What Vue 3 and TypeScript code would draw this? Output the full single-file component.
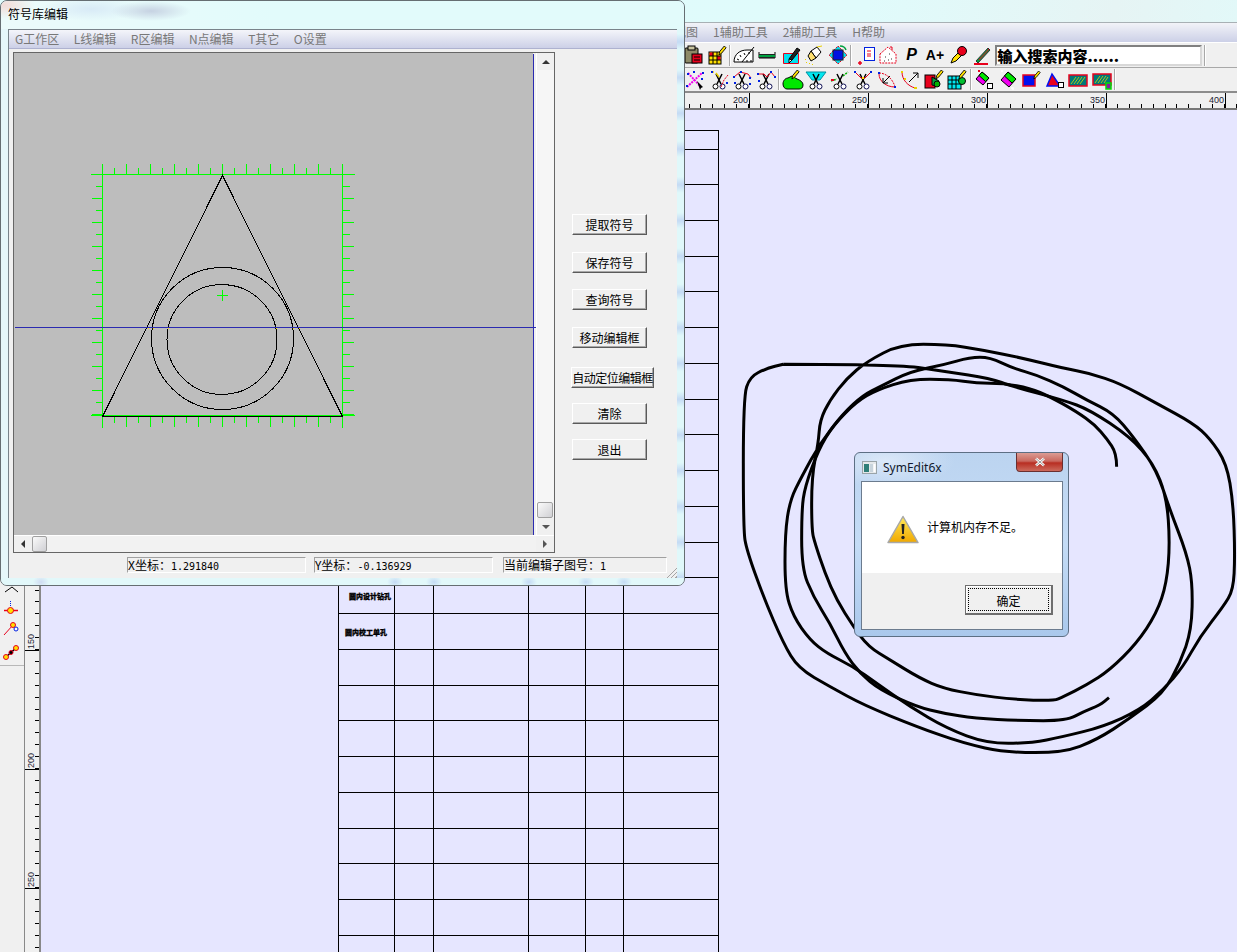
<script setup lang="ts">
// SymEdit main window with the symbol library editor and an out-of-memory
// dialog sitting on top. Canvases use screen coordinates in their viewBox.
const STEP = 11.9;

const hMajors = [749, 868, 987, 1106, 1225];
const hMinors = Array.from({ length: 48 }, (_, i) => 689 + i * STEP);
const hLabels = [200, 250, 300, 350, 400];

const vMajors = [650, 769, 888];
const vMinors = Array.from({ length: 32 }, (_, i) => 590 + i * STEP);
const vLabels = [150, 200, 250];

const colX = [338, 394, 433, 528, 585, 623, 718];
const rowY = [130, 149, ...Array.from({ length: 22 }, (_, i) => 184 + i * 35.75)];

const menus = ["G工作区", "L线编辑", "R区编辑", "N点编辑", "T其它", "O设置"];
const buttons = [
  { label: "提取符号", gap: 162 },
  { label: "保存符号", gap: 17 },
  { label: "查询符号", gap: 16 },
  { label: "移动编辑框", gap: 17 },
  { label: "自动定位编辑框", gap: 19, wide: true },
  { label: "清除", gap: 15 },
  { label: "退出", gap: 15 },
];

// green frame ticks around the symbol edit box, every 12px
const ticks = Array.from({ length: 21 }, (_, i) => ({
  at: i * 12,
  len: i % 2 === 0 ? 11 : 7,
}));
const hits = [147, 152, 167, 275, 292, 298];

// pen scribble, traced in 3x coordinates
const traces = [
  "1160,410 1160,370 1130,325 1095,285 1040,245 960,200 900,175 820,160 740,160 660,148 540,148 440,180 380,215 310,285 265,360 225,470 215,540 215,715 250,800 300,880 345,970 390,1030 450,1080 560,1130 640,1150 735,1165 870,1172 1010,1172 1060,1145 1110,1125 1137,1103",
  "160,103 500,103 650,125 780,145 850,170 1000,210 1080,240 1200,320 1270,400 1310,500 1320,640 1310,760 1280,850 1220,940 1140,1020 1070,1065 1000,1100 970,1113 850,1108 740,1095 640,1075 570,1045 480,990 415,950 370,890 320,810 285,730 255,640 245,600 245,440 265,340 270,270 300,210 350,145 410,95 510,43 650,43 760,60 880,85 1000,115 1080,130 1170,160 1280,220 1390,280 1440,325 1490,400 1510,520 1515,680 1510,780 1480,830 1410,920 1360,1010 1300,1080 1230,1140 1120,1190 1000,1220 900,1240 770,1240 650,1195 540,1130 440,1060 370,1010 290,970 240,930 190,860 165,780 165,610 180,510 215,440 270,340 340,250 400,195 450,170 540,125 640,105 720,82 780,82 850,115 920,135 1000,170 1070,210 1150,250 1210,320 1280,420 1320,540 1370,670 1388,760 1385,900 1350,1000 1300,1090 1200,1165 1100,1230 1000,1268 830,1268 700,1240 560,1190 400,1125 300,1070 205,1015 160,940 100,800 50,660 40,600 40,200 60,140 110,115 160,103",
];

// round the traced corners off through the segment midpoints
function smooth(trace: string): string {
  const p = trace.split(" ").map((s) => s.split(",").map(Number));
  let d = `M${p[0][0]} ${p[0][1]}`;
  for (let i = 1; i < p.length - 1; i++) {
    const mx = (p[i][0] + p[i + 1][0]) / 2;
    const my = (p[i][1] + p[i + 1][1]) / 2;
    d += ` Q${p[i][0]} ${p[i][1]} ${mx} ${my}`;
  }
  const last = p[p.length - 1];
  return `${d} L${last[0]} ${last[1]}`;
}
const scribble = traces.map(smooth);
</script>

<template>
  <div class="desktop">
    <svg class="defs" width="0" height="0">
      <symbol id="sc" viewBox="0 0 22 22">
        <path d="M8 5l5 10M14 5l-5 10" stroke="#000" stroke-width="1.5" fill="none" />
        <circle cx="7.5" cy="17.5" r="2.5" fill="#fff" stroke="#000" />
        <circle cx="14.5" cy="17.5" r="2.5" fill="#fff" stroke="#115" />
      </symbol>
      <symbol id="pen" viewBox="0 0 10 12">
        <path d="M1 11l1-4 5-6 2 2-5 6z" fill="#ffe000" stroke="#000" stroke-width="1" />
      </symbol>
    </svg>

    <div class="main">
      <div class="title-strip"></div>
      <div class="menubar">
        <span class="m-item view">视图</span>
        <span class="m-item">1辅助工具</span>
        <span class="m-item">2辅助工具</span>
        <span class="m-item">H帮助</span>
      </div>

      <div class="tools first">
        <svg class="tb" viewBox="0 0 22 22">
          <rect x="3" y="4" width="13" height="15" rx="1" fill="#8d8a68" stroke="#000" />
          <rect x="6" y="2" width="7" height="4" fill="#c8c4a0" stroke="#000" />
          <rect x="10" y="10" width="10" height="9" fill="#e8001c" stroke="#000" />
          <path d="M12 13h6M12 16h6" stroke="#000" />
        </svg>
        <svg class="tb" viewBox="0 0 22 22">
          <rect x="3" y="8" width="12" height="12" fill="#ffe000" stroke="#000" />
          <rect x="3.500" y="8.500" width="4" height="3.500" fill="#e8001c" />
          <rect x="11" y="12" width="3.500" height="4" fill="#e8001c" />
          <path d="M3 12h12M3 16h12M7 8v12M11 8v12" stroke="#000" />
          <use href="#pen" x="12" y="1" width="9" height="11" />
        </svg>
        <i class="sep"></i>
        <svg class="tb wide-fan" viewBox="0 0 22 22">
          <path d="M1 18c0-8 6-12 13-12h6v12z" fill="#fff" stroke="#000" />
          <path d="M9 18L21 3M4 15l2 1M7 11l1 2M11 9l1 2M16 8v2M14 18v-2M18 18v-2" stroke="#000" fill="none" />
        </svg>
        <svg class="tb" viewBox="0 0 22 22">
          <path d="M3 8v6h16V8" fill="none" stroke="#000" />
          <rect x="3" y="11" width="16" height="2" fill="#00a040" />
          <path d="M3 10.500h16M3 13.500h16" stroke="#222" />
        </svg>
        <svg class="tb" viewBox="0 0 22 22">
          <path d="M3.500 9.500h15v10h-15z" fill="#00e0f0" stroke="#e8001c" />
          <path d="M9 15l8-11 3 2-8 10z" fill="#222" stroke="#000" />
          <path d="M9 15l3 1-3 3z" fill="#fff" stroke="#000" />
        </svg>
        <svg class="tb" viewBox="0 0 22 22">
          <path d="M8 7l6-4 4 5-5 6z" fill="#fff" stroke="#000" />
          <path d="M8 7l5 7-5 3-3-5z" fill="#ffe070" stroke="#000" />
          <path d="M14 3l5-1M3 18l1 1M6 19l1 1M2 15l1 1M9 20l1 1" stroke="#e8d000" />
        </svg>
        <svg class="tb" viewBox="0 0 22 22">
          <path d="M11 2l9 9-9 9-9-9z" fill="#00d8e8" stroke="#e8001c" stroke-dasharray="2 1" />
          <rect x="6" y="6" width="10" height="10" fill="#0010e0" stroke="#222" />
          <path d="M13 2c3 0 5 1 6 4" fill="none" stroke="#00a040" stroke-width="1.5" />
        </svg>
        <i class="sep"></i>
        <svg class="tb" viewBox="0 0 22 22">
          <rect x="10.500" y="3.500" width="10" height="13" fill="#fff" stroke="#0020e0" />
          <path d="M13 7h4M13 10h4M13 12h4" stroke="#e8001c" />
          <path d="M4 19h4M6 17v4" stroke="#e8001c" stroke-width="1.500" />
        </svg>
        <svg class="tb" viewBox="0 0 22 22">
          <path d="M3 10l8-7 8 7v9H3z" fill="#fff" stroke="#e8001c" stroke-dasharray="2 1" />
          <path d="M8 13h1M12 10h1M14 15h1M7 17h1M11 16h1" stroke="#333" />
          <path d="M13 3h2v3" fill="none" stroke="#e8001c" />
        </svg>
        <span class="tb glyph p">P</span>
        <span class="tb glyph a">A+</span>
        <svg class="tb" viewBox="0 0 22 22">
          <path d="M3 19l2-5 6-6 3 3-6 6z" fill="#ffe000" stroke="#000" />
          <circle cx="14" cy="7" r="4.500" fill="#e8001c" stroke="#000" />
        </svg>
        <svg class="tb" viewBox="0 0 22 22">
          <path d="M5 17l12-13 2 2-12 13z" fill="#00a040" stroke="#333" />
          <path d="M8 16l10-11" stroke="#e8001c" />
          <path d="M3 20h14" stroke="#e8001c" stroke-width="2" />
        </svg>
        <div class="search">输入搜索内容......</div>
        <i class="sep"></i>
      </div>

      <div class="tools second">
        <svg class="tb" viewBox="0 0 22 22">
          <path d="M3 18L18 4" stroke="#f000f0" stroke-width="2" stroke-dasharray="2 1" />
          <path d="M4 4l12 13" stroke="#f000f0" stroke-width="2" stroke-dasharray="2 1" />
          <path d="M3 5h2M18 4h2M2 17h2M9 3h2M17 10h2" stroke="#0020e0" stroke-width="2" />
          <path d="M13 12l6 6-2 1-1 2z" fill="#000" />
        </svg>
        <svg class="tb" viewBox="0 0 22 22">
          <use href="#sc" width="22" height="22" />
          <path d="M3 3h3M8 4l3 4" stroke="#e8d000" stroke-width="1.500" />
          <path d="M20 6l-4 5-3 7" stroke="#e8001c" stroke-dasharray="2 1" fill="none" />
          <path d="M3 3h2M18 14h2" stroke="#0020e0" stroke-width="2" />
        </svg>
        <svg class="tb" viewBox="0 0 22 22">
          <use href="#sc" width="22" height="22" />
          <path d="M3 8l6-5 8 2 3 4" stroke="#e8001c" fill="none" />
          <path d="M2 8h2M9 3h2M18 9h2M3 14h2M18 15h2" stroke="#0020e0" stroke-width="2" />
        </svg>
        <svg class="tb" viewBox="0 0 22 22">
          <use href="#sc" width="22" height="22" />
          <path d="M2 5h7l3 3 4-5 4 5" stroke="#e8001c" fill="none" />
          <path d="M2 5h2M15 3h2M19 8h2M3 12h2" stroke="#0020e0" stroke-width="2" />
        </svg>
        <i class="sep"></i>
        <svg class="tb" viewBox="0 0 22 22">
          <path d="M1 15c0-4 3-6 5-6l4-2 5 3c3 1 6 3 6 6s-2 4-4 4H5c-2 0-4-2-4-5z" fill="#00e800" stroke="#000" />
          <use href="#pen" x="9" y="0" width="9" height="11" />
        </svg>
        <svg class="tb" viewBox="0 0 22 22">
          <path d="M1 3h20l-6 8H7z" fill="#00e8f0" stroke="#0090a0" />
          <use href="#sc" width="22" height="22" />
        </svg>
        <svg class="tb" viewBox="0 0 22 22">
          <use href="#sc" width="22" height="22" />
          <path d="M2 12l6-2M14 7l5-4" stroke="#00b000" stroke-dasharray="2 1" stroke-width="1.500" />
          <path d="M2 11h3" stroke="#e8001c" stroke-width="2" />
        </svg>
        <svg class="tb" viewBox="0 0 22 22">
          <use href="#sc" width="22" height="22" />
          <path d="M3 3l6 6h4l6-6" stroke="#e8001c" fill="none" />
          <path d="M2 3h2M18 3h2" stroke="#0020e0" stroke-width="2" />
          <path d="M10 9h2" stroke="#ffe000" stroke-width="2" />
        </svg>
        <svg class="tb" viewBox="0 0 22 22">
          <path d="M3 4c7 0 14 6 16 14" stroke="#e8001c" fill="none" stroke-dasharray="2 1" />
          <path d="M3 5c0 7 7 13 16 13" stroke="#e8001c" fill="none" />
          <path d="M14 7l-7 7M7 9v5h5" stroke="#000" fill="none" />
          <path d="M2 4h2M18 18h2" stroke="#0020e0" stroke-width="2" />
        </svg>
        <svg class="tb" viewBox="0 0 22 22">
          <path d="M3 3c0 8 6 14 13 16" stroke="#e8001c" fill="none" />
          <path d="M2 3h2M15 19h3M5 10h2" stroke="#e8d000" stroke-width="2" />
          <path d="M10 13l9-9M14 4h5v5" stroke="#000" fill="none" />
        </svg>
        <svg class="tb" viewBox="0 0 22 22">
          <rect x="2" y="6" width="10" height="13" fill="#e8001c" stroke="#000" />
          <path d="M9 8l7 4-3 5-4-1z" fill="#00a040" stroke="#000" />
          <circle cx="14" cy="15" r="3" fill="#00b000" stroke="#000" />
          <use href="#pen" x="12" y="0" width="9" height="11" />
        </svg>
        <svg class="tb" viewBox="0 0 22 22">
          <rect x="2" y="7" width="13" height="13" fill="#00e8f0" stroke="#000" />
          <path d="M2 11h13M2 15h13M6 7v13M10 7v13" stroke="#000" />
          <circle cx="16" cy="12" r="3.500" fill="#00c030" stroke="#000" />
          <use href="#pen" x="12" y="0" width="9" height="11" />
        </svg>
        <i class="sep"></i>
        <svg class="tb" viewBox="0 0 22 22">
          <path d="M9 3l7 6-6 7-7-6z" fill="#f000f0" stroke="#000" />
          <path d="M9 3l7 6-3.500 3.500-6.500-6z" fill="#00e800" stroke="#000" />
          <rect x="14.500" y="14.500" width="5" height="5" fill="#fff" stroke="#000" />
          <path d="M5 2h2" stroke="#e8001c" stroke-width="2" />
        </svg>
        <svg class="tb" viewBox="0 0 22 22">
          <path d="M11 3l8 7-7 8-8-7z" fill="#f000f0" stroke="#000" />
          <path d="M11 3l8 7-4 4-7.500-7z" fill="#00e800" stroke="#000" />
          <path d="M4 2h2M14 19h2v2" stroke="#fff" stroke-width="1.500" fill="none" />
        </svg>
        <svg class="tb" viewBox="0 0 22 22">
          <rect x="3" y="6" width="12" height="11" fill="#0010f0" stroke="#e8001c" stroke-width="1.500" />
          <use href="#pen" x="13" y="1" width="8" height="10" />
        </svg>
        <svg class="tb" viewBox="0 0 22 22">
          <path d="M3 17L8 5l8 12z" fill="#e8001c" stroke="#0010f0" stroke-width="1.500" />
          <rect x="14.500" y="13.500" width="5" height="5" fill="#fff" stroke="#000" />
        </svg>
        <svg class="tb" viewBox="0 0 22 22">
          <rect x="2" y="6" width="18" height="11" fill="#007878" stroke="#e8001c" stroke-width="1.500" />
          <path d="M4 15l5-7M7 15l5-7M10 15l5-7M13 15l5-7" stroke="#d8d800" stroke-width="0.800" />
        </svg>
        <svg class="tb" viewBox="0 0 22 22">
          <rect x="2" y="5" width="18" height="11" fill="#007878" stroke="#e8001c" stroke-width="1.500" />
          <path d="M4 14l5-7M7 14l5-7M10 14l5-7M13 14l4-6" stroke="#d8d800" stroke-width="0.800" />
          <rect x="15" y="14" width="5" height="6" fill="#8020a0" stroke="#00e000" stroke-width="1.500" />
        </svg>
        <i class="sep"></i>
      </div>

      <svg class="hruler" viewBox="0 93 1237 15" width="1237" height="15">
        <g shape-rendering="crispEdges" stroke="#000">
          <line v-for="x in hMinors" :key="x" :x1="x" :x2="x" y1="104" y2="108" />
          <line v-for="x in hMajors" :key="x" :x1="x" :x2="x" y1="93" y2="108" />
        </g>
        <text v-for="(n, i) in hLabels" :key="n" class="rule-num" :x="hMajors[i] - 1" y="103" text-anchor="end">{{ n }}</text>
      </svg>

      <div class="work">
        <div class="left-tools">
          <svg class="lt chev" viewBox="0 0 24 10">
            <path d="M5 8l7-5 6 5" fill="none" stroke="#000" />
          </svg>
          <svg class="lt" viewBox="0 0 24 21">
            <path d="M4 10.500h14" stroke="#e8001c" stroke-width="1.500" />
            <path d="M10.500 1v6" stroke="#0020e0" stroke-dasharray="1 1" />
            <circle cx="10.500" cy="10.500" r="3" fill="#ffe000" stroke="#e8001c" />
          </svg>
          <svg class="lt" viewBox="0 0 24 21">
            <path d="M4 14l9-10" stroke="#e8001c" />
            <circle cx="13" cy="4" r="2.500" fill="#ffe000" stroke="#e8001c" />
            <circle cx="16" cy="8" r="2" fill="#fff" stroke="#0020e0" />
          </svg>
          <svg class="lt" viewBox="0 0 24 21">
            <path d="M6 15l10-9" stroke="#000" stroke-width="1.500" />
            <circle cx="6" cy="15" r="2.500" fill="#ffe000" stroke="#e8001c" />
            <circle cx="16" cy="6" r="2.500" fill="#ffe000" stroke="#e8001c" />
            <circle cx="11" cy="10.500" r="2" fill="#000" stroke="#e8001c" />
          </svg>
          <hr class="lt-rule" />
        </div>

        <svg class="vruler" viewBox="25 110 14 842" width="14" height="842">
          <g shape-rendering="crispEdges" stroke="#000">
            <line v-for="y in vMinors" :key="y" x1="35" x2="39" :y1="y" :y2="y" />
            <line v-for="y in vMajors" :key="y" x1="25" x2="39" :y1="y" :y2="y" />
          </g>
          <text
            v-for="(n, i) in vLabels"
            :key="n"
            class="rule-num"
            :transform="`translate(34 ${vMajors[i] - 1}) rotate(-90)`"
          >{{ n }}</text>
        </svg>

        <svg class="sheet" viewBox="41 110 1196 842" width="1196" height="842">
          <g shape-rendering="crispEdges" stroke="#000" transform="translate(0.5 0.5)">
            <line v-for="x in colX" :key="x" :x1="x" :x2="x" y1="130" y2="952" />
            <line v-for="y in rowY" :key="y" x1="338" x2="718" :y1="y" :y2="y" />
          </g>
          <text class="cell" x="349" y="599">圆内设计钻孔</text>
          <text class="cell" x="345" y="635">圆内校工单孔</text>
          <g transform="translate(730 330) scale(0.3333)">
            <path v-for="d in scribble" :key="d" class="ink" :d="d" />
          </g>
        </svg>
      </div>
    </div>

    <section class="editor">
      <div class="ed-title">符号库编辑</div>
      <div class="ed-client">
        <div class="ed-menu">
          <span v-for="m in menus" :key="m" class="ed-menu-item">{{ m }}</span>
        </div>
        <div class="ed-body">
          <div class="viewport">
            <div class="vp-row">
              <svg class="drawing" viewBox="14 53 522 482" width="522" height="482">
                <rect x="14" y="53" width="519" height="482" fill="#bdbdbd" />
                <g shape-rendering="crispEdges" transform="translate(0.5 0.5)">
                  <g stroke="#00ff00">
                    <line x1="90" x2="354" y1="174" y2="174" />
                    <line x1="90" x2="354" y1="415" y2="415" />
                    <line x1="102" x2="102" y1="163" y2="427" />
                    <line x1="342" x2="342" y1="163" y2="427" />
                    <line x1="216" x2="227" y1="295" y2="295" />
                    <line x1="222" x2="222" y1="289" y2="300" />
                    <template v-for="t in ticks" :key="t.at">
                      <line :x1="102 + t.at" :x2="102 + t.at" :y1="174 - t.len" y2="174" />
                      <line :x1="102 + t.at" :x2="102 + t.at" y1="415" :y2="415 + t.len" />
                      <line :x1="102 - t.len" x2="102" :y1="174 + t.at" :y2="174 + t.at" />
                      <line x1="342" :x2="342 + t.len" :y1="174 + t.at" :y2="174 + t.at" />
                    </template>
                  </g>
                  <g fill="none" stroke="#000">
                    <path d="M102 416L222 175L342 416Z" />
                    <circle cx="222" cy="338" r="71" />
                    <circle cx="221.500" cy="339" r="55" />
                  </g>
                  <line x1="14" x2="536" y1="327" y2="327" stroke="#2a2ab0" />
                  <line x1="533" x2="533" y1="53" y2="535" stroke="#2a2ab0" />
                  <rect v-for="x in hits" :key="x" :x="x" y="327" width="1" height="1" fill="#ffe000" />
                </g>
              </svg>
              <div class="vscroll">
                <button class="sb-btn"><i class="tri up"></i></button>
                <div class="sb-fill"></div>
                <div class="thumb v"></div>
                <button class="sb-btn"><i class="tri down"></i></button>
              </div>
            </div>
            <div class="hscroll">
              <button class="sb-btn"><i class="tri left"></i></button>
              <div class="thumb h"></div>
              <div class="sb-fill"></div>
              <button class="sb-btn"><i class="tri right"></i></button>
            </div>
          </div>
          <div class="actions">
            <button
              v-for="b in buttons"
              :key="b.label"
              class="act"
              :class="{ wide: b.wide }"
              :style="{ marginTop: b.gap + 'px' }"
            >{{ b.label }}</button>
          </div>
        </div>
        <div class="status">
          <div class="field f1">X坐标：<span class="num">1.291840</span></div>
          <div class="field f2">Y坐标：<span class="num">-0.136929</span></div>
          <div class="field f3">当前编辑子图号：<span class="num">1</span></div>
          <i class="grip"></i>
        </div>
      </div>
      <div class="ed-bottom"></div>
    </section>

    <section class="dialog">
      <header class="dlg-head">
        <svg class="dlg-icon" viewBox="0 0 15 15" width="15" height="15">
          <rect x="0.500" y="1.500" width="14" height="12" fill="#e4e8ea" stroke="#9aa4a8" />
          <rect x="2" y="4" width="5" height="8" fill="#2f7f78" />
          <rect x="8" y="4" width="3" height="8" fill="#c8d4dc" />
          <rect x="11.500" y="4" width="2" height="8" fill="#fff" />
        </svg>
        <span class="dlg-title">SymEdit6x</span>
        <div class="dlg-close">
          <svg viewBox="0 0 12 10" width="12" height="10">
            <path d="M2 1.500l8 7M10 1.500l-8 7" stroke="#fff" stroke-width="2.600" />
            <path d="M2 1.500l8 7M10 1.500l-8 7" stroke="#5a5a5a" stroke-width="0.600" />
          </svg>
        </div>
      </header>
      <div class="dlg-client">
        <div class="dlg-msg">
          <svg class="warn" viewBox="0 0 32 29" width="32" height="29">
            <defs>
              <linearGradient id="wg" x1="0" x2="0" y1="0" y2="1">
                <stop offset="0" stop-color="#ffe95a" />
                <stop offset="1" stop-color="#f0a800" />
              </linearGradient>
            </defs>
            <path d="M16 1.500L31 27.500H1Z" fill="url(#wg)" stroke="#a8a8a8" stroke-width="1.500" stroke-linejoin="round" />
            <path d="M14.500 9h3l-.6 10h-1.800z" fill="#222" />
            <circle cx="16" cy="22.500" r="1.700" fill="#222" />
          </svg>
          <span>计算机内存不足。</span>
        </div>
        <div class="dlg-foot">
          <button class="dlg-ok"><span>确定</span></button>
        </div>
      </div>
    </section>
  </div>
</template>

<style scoped>
.desktop {
  position: relative;
  width: 1237px;
  height: 952px;
  overflow: hidden;
  background: #e6e6ff;
  font-family: "Noto Sans CJK SC", "Liberation Sans", sans-serif;
  font-size: 12px;
  color: #000;
}
.defs {
  position: absolute;
}
.main {
  display: flex;
  flex-direction: column;
  height: 952px;
}
.title-strip {
  height: 22px;
  background: linear-gradient(100deg, #dffbfb 0%, #e0fbfb 70%, #e6f4f4 90%, #e2f8f8 100%);
  border-bottom: 1px solid #a8b0b4;
  box-sizing: content-box;
}
.menubar {
  height: 19px;
  box-sizing: border-box;
  display: flex;
  align-items: center;
  padding: 0 0 2px 674px;
  gap: 15px;
  background: linear-gradient(#f2f3f8, #ccd0e7);
  color: #787878;
}
.tools {
  display: flex;
  align-items: center;
  gap: 1.5px;
  background: #f0f0f0;
}
.tools.first {
  height: 26px;
  padding-left: 682px;
  border-bottom: 1px solid #a8a8a8;
  border-top: 1px solid #fff;
  box-sizing: border-box;
}
.tools.second {
  height: 25px;
  padding-left: 684px;
  border-bottom: 2px solid #8c8c8c;
  box-sizing: border-box;
}
.tb {
  width: 22px;
  height: 22px;
  flex: none;
}
.glyph {
  display: block;
  text-align: center;
  line-height: 22px;
  font-weight: 700;
}
.glyph.p {
  font-family: "Liberation Sans", sans-serif;
  font-style: italic;
  font-size: 16px;
}
.glyph.a {
  font-family: "Liberation Sans", sans-serif;
  font-size: 14px;
}
.sep {
  width: 2px;
  height: 21px;
  flex: none;
  background: #a8a8a8;
  border-right: 1px solid #fff;
  box-sizing: border-box;
}
.search {
  width: 207px;
  height: 21px;
  flex: none;
  box-sizing: border-box;
  background: #fff;
  border: 2px solid;
  border-color: #808080 #d8d8d8 #d8d8d8 #808080;
  font-family: "Noto Sans CJK SC", sans-serif;
  font-size: 15px;
  font-weight: 900;
  line-height: 17px;
  padding-left: 1px;
  margin-right: 1px;
  white-space: nowrap;
  overflow: hidden;
}
.hruler {
  display: block;
  flex: none;
  background: #f0f0f0;
  border-bottom: 2px solid #777;
  box-sizing: content-box;
}
.rule-num {
  font-family: "Liberation Sans", sans-serif;
  font-size: 9px;
  fill: #223;
}
.work {
  flex: 1;
  display: flex;
  min-height: 0;
  background: #e6e6ff;
}
.left-tools {
  width: 24px;
  flex: none;
  display: flex;
  flex-direction: column;
  padding-top: 474px;
  background: #f0f0f0;
  border-right: 1px solid #888;
  box-sizing: content-box;
}
.lt {
  width: 24px;
  height: 21px;
  flex: none;
  display: block;
}
.lt.chev {
  height: 10px;
  margin-bottom: 6px;
}
.lt-rule {
  width: 24px;
  margin: 2px 0 0;
  border: 0;
  border-top: 1px solid #b8b8b8;
}
.vruler {
  flex: none;
  display: block;
  background: #f0f0f0;
}
.sheet {
  flex: none;
  display: block;
  border-left: 2px solid #888;
  box-sizing: content-box;
}
.cell {
  font-size: 7px;
  font-weight: 900;
  stroke: #000;
  stroke-width: 0.3px;
}
.ink {
  fill: none;
  stroke: #000;
  stroke-width: 9;
  stroke-linejoin: round;
}

.editor {
  position: absolute;
  left: 0;
  top: 0;
  width: 685px;
  height: 586px;
  box-sizing: border-box;
  display: flex;
  flex-direction: column;
  border: 1px solid #666e72;
  border-radius: 7px;
  background:
    linear-gradient(to right, #e6f7fa 0 8px, transparent 8px),
    linear-gradient(#c4daf4, #e0f8fa 22%, #e0f8fa 78%, #c4daf4) 0 5px / 100% 35.75px;
}
.ed-title {
  height: 28px;
  flex: none;
  padding: 5px 0 0 7px;
  box-sizing: border-box;
  line-height: 16px;
  font-size: 12px;
  border-radius: 6px 6px 0 0;
  background:
    radial-gradient(ellipse 40px 10px at 150px 10px, #c6d2e2, transparent),
    radial-gradient(ellipse 50px 12px at 90px 8px, #d8eaf6, transparent),
    radial-gradient(ellipse 30px 14px at 4px 4px, #f2dcd8, transparent),
    linear-gradient(90deg, #ecfbfb, #e2fbfb 40%, #e2fbfb);
}
.ed-client {
  flex: 1;
  margin: 0 7px;
  display: flex;
  flex-direction: column;
  background: #f0f0f0;
  border: 1px solid #79838a;
  border-width: 1px 0 0 1px;
  min-height: 0;
}
.ed-menu {
  height: 19px;
  flex: none;
  box-sizing: border-box;
  display: flex;
  align-items: center;
  padding: 0 0 2px 6px;
  gap: 14.5px;
  background: linear-gradient(#f4f5fa, #ccd0e7);
  border-bottom: 1px solid #aeb2d0;
  color: #787878;
}
.ed-body {
  flex: none;
  height: 504px;
  display: flex;
  padding: 3px 0 0 4px;
  box-sizing: border-box;
}
.viewport {
  width: 542px;
  height: 501px;
  flex: none;
  box-sizing: border-box;
  border: 1px solid #666;
  display: flex;
  flex-direction: column;
}
.vp-row {
  display: flex;
  height: 482px;
}
.drawing {
  display: block;
  background: #f0f0f0;
  flex: none;
}
.vscroll {
  width: 18px;
  flex: none;
  display: flex;
  flex-direction: column;
  background: #f6f6f6;
  border-left: 1px solid #fff;
  box-sizing: border-box;
}
.hscroll {
  height: 17px;
  flex: none;
  display: flex;
  align-items: stretch;
  background: #f2f2f2;
  border-top: 1px solid #fff;
  box-sizing: border-box;
}
.sb-fill {
  flex: 1;
}
.sb-btn {
  appearance: none;
  border: 0;
  padding: 0;
  background: #f0f0f0;
  display: flex;
  align-items: center;
  justify-content: center;
  flex: none;
}
.vscroll .sb-btn {
  height: 17px;
}
.hscroll .sb-btn {
  width: 18px;
}
.tri {
  width: 0;
  height: 0;
  border-style: solid;
  border-color: transparent;
}
.tri.up {
  border-width: 0 4px 4px;
  border-bottom-color: #333;
}
.tri.down {
  border-width: 4px 4px 0;
  border-top-color: #555;
}
.tri.left {
  border-width: 4px 4px 4px 0;
  border-right-color: #333;
}
.tri.right {
  border-width: 4px 0 4px 4px;
  border-left-color: #555;
}
.thumb {
  flex: none;
  box-sizing: border-box;
  border: 1px solid #a0a0a0;
  border-radius: 2px;
  background: linear-gradient(135deg, #fafafa, #d0d0d4);
}
.thumb.v {
  height: 16px;
  margin: 0 1px 0 0;
}
.thumb.h {
  width: 15px;
}
.actions {
  display: flex;
  flex-direction: column;
  align-items: flex-start;
  margin-left: 17px;
}
.act {
  appearance: none;
  width: 75px;
  height: 21px;
  padding: 0;
  flex: none;
  box-sizing: border-box;
  font: inherit;
  color: #000;
  line-height: 17px;
  white-space: nowrap;
  background: #f0f0f0;
  border: 1px solid;
  border-color: #fff #5a5a5a #5a5a5a #fff;
  box-shadow: inset -1px -1px 0 #a8a8a8;
}
.act.wide {
  width: 83px;
  margin-left: -1px;
  letter-spacing: -0.5px;
}
.status {
  position: relative;
  flex: 1;
  display: flex;
  align-items: flex-start;
  padding: 4px 0 0 118px;
}
.field {
  height: 16px;
  flex: none;
  box-sizing: border-box;
  border: 1px solid;
  border-color: #a0a0a0 #fff #fff #a0a0a0;
  line-height: 14px;
  white-space: nowrap;
}
.f1,
.f2 {
  width: 179px;
  margin-right: 8px;
}
.f2 {
  margin-right: 10px;
}
.f3 {
  width: 164px;
}
.num {
  font-family: "DejaVu Sans Mono", "Liberation Mono", monospace;
  font-size: 10px;
}
.grip {
  position: absolute;
  right: 0;
  bottom: 0;
  width: 11px;
  height: 11px;
  background: repeating-linear-gradient(135deg, transparent 0 2px, #a4a4a4 2px 3px);
  clip-path: polygon(100% 0, 100% 100%, 0 100%);
}
.ed-bottom {
  height: 7px;
  flex: none;
  border-radius: 0 0 6px 6px;
  background:
    radial-gradient(ellipse 8px 6px at 394px 4px, #c4daf4, transparent),
    radial-gradient(ellipse 8px 6px at 433px 4px, #c4daf4, transparent),
    radial-gradient(ellipse 8px 6px at 528px 4px, #c4daf4, transparent),
    radial-gradient(ellipse 8px 6px at 585px 4px, #c4daf4, transparent),
    radial-gradient(ellipse 8px 6px at 623px 4px, #c4daf4, transparent),
    radial-gradient(ellipse 8px 6px at 40px 4px, #cfdcf2, transparent),
    #e2f8fa;
}

.dialog {
  position: absolute;
  left: 854px;
  top: 452px;
  width: 215px;
  height: 185px;
  box-sizing: border-box;
  display: flex;
  flex-direction: column;
  border: 1px solid #5d6f84;
  border-radius: 6px;
  padding: 0 5px 6px 6px;
  background:
    radial-gradient(ellipse 70px 26px at 30px 8px, #dbe8f8, transparent),
    linear-gradient(#bcd4f0, #c4dcf6 50%, #aac8ec);
}
.dlg-head {
  position: relative;
  height: 28px;
  flex: none;
  display: flex;
  align-items: center;
  padding-left: 1px;
  gap: 6px;
}
.dlg-icon {
  flex: none;
}
.dlg-title {
  font-family: "Noto Sans", "Liberation Sans", sans-serif;
  font-size: 12px;
  color: #10182c;
}
.dlg-close {
  position: absolute;
  right: 0;
  top: 0;
  width: 47px;
  height: 19px;
  box-sizing: border-box;
  display: flex;
  align-items: center;
  justify-content: center;
  border: 1px solid #6a3030;
  border-top: 0;
  border-radius: 0 0 4px 4px;
  background: linear-gradient(#dc9c94 0, #c9685e 45%, #b82e22 55%, #cc6a5c 100%);
}
.dlg-client {
  flex: 1;
  display: flex;
  flex-direction: column;
  background: #fff;
  border: 1px solid #6b7b8e;
}
.dlg-msg {
  flex: 1;
  display: flex;
  align-items: flex-start;
  padding: 33px 0 0 25px;
  line-height: 24px;
}
.warn {
  flex: none;
  margin-right: 8px;
}
.dlg-foot {
  height: 56px;
  flex: none;
  box-sizing: border-box;
  background: #f0f0f0;
  display: flex;
  justify-content: flex-end;
  padding: 12px 9px 0 0;
}
.dlg-ok {
  appearance: none;
  width: 88px;
  height: 30px;
  box-sizing: border-box;
  padding: 2px;
  font: inherit;
  color: #000;
  background: #f0f0f0;
  border: 1px solid #6e6e6e;
  border-right-width: 2px;
  border-bottom-width: 2px;
  box-shadow: inset 1px 1px 0 #fff;
}
.dlg-ok span {
  display: block;
  height: 100%;
  line-height: 23px;
  border: 1px dotted #000;
  box-sizing: border-box;
}
</style>

<style>
html,
body {
  margin: 0;
  background: #e6e6ff;
  overflow: hidden;
}
</style>
